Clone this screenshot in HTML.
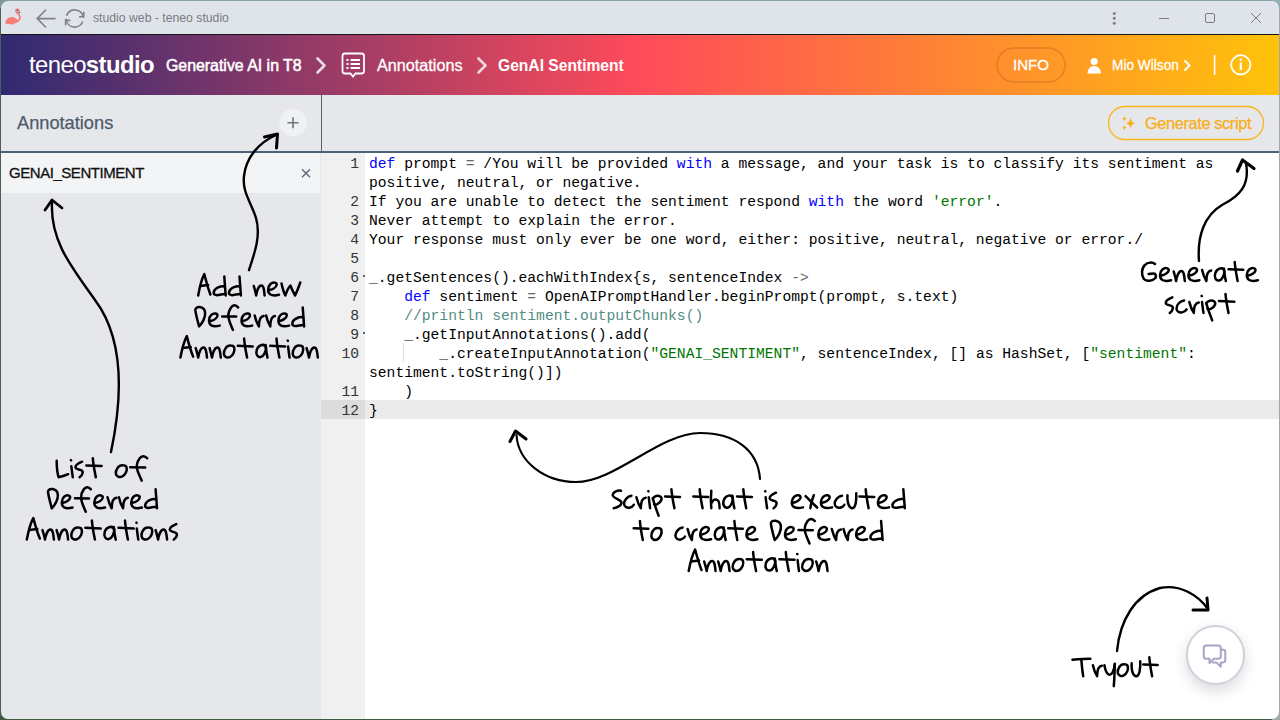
<!DOCTYPE html>
<html><head><meta charset="utf-8">
<style>
*{margin:0;padding:0;box-sizing:border-box}
html,body{width:1280px;height:720px;overflow:hidden;background:#3c4a3f}
body{font-family:"Liberation Sans",sans-serif;position:relative}
.abs{position:absolute}
#win{position:absolute;left:0;top:0;width:1280px;height:720px;background:#e6e7eb}
#tb{position:absolute;left:0;top:0;width:1280px;height:34px;background:#dfe3ea}
#tbline{position:absolute;left:0;top:34px;width:1280px;height:1px;background:#151515}
#hdr{position:absolute;left:0;top:35px;width:1280px;height:60px;
 background:linear-gradient(90deg,#2f2a72 0%,#ff4b5a 50%,#ffc30a 100%)}
.ht{position:absolute;color:#fff;white-space:nowrap}
.med{-webkit-text-stroke:0.3px #fff}
.semi{-webkit-text-stroke:0.55px #fff}
#lp{position:absolute;left:0;top:95px;width:320px;height:625px;background:#e6e7eb}
#ph{position:absolute;left:0;top:95px;width:1280px;height:57px;background:#e6e7eb}
#hline{position:absolute;left:0;top:151px;width:1280px;height:2px;background:#4f6174}
#vline{position:absolute;left:321px;top:95px;width:1.2px;height:57px;background:#4f6174}
#item{position:absolute;left:0;top:153px;width:320px;height:40px;background:#f3f4f6}
#ed{position:absolute;left:321px;top:153px;width:959px;height:567px;background:#fff}
#gut{position:absolute;left:321px;top:153px;width:44px;height:567px;background:#f0f0f0}
#act{position:absolute;left:321px;top:400px;width:959px;height:19px;background:#ebebeb}
#code{position:absolute;left:0;top:0;font-family:"Liberation Mono",monospace;font-size:14.667px;line-height:19px;color:#000;white-space:pre}
.ln{position:absolute;left:321px;width:38px;text-align:right;font-family:"Liberation Mono",monospace;font-size:14.667px;line-height:19px;color:#333}
.cl{position:absolute;left:369px;font-family:"Liberation Mono",monospace;font-size:14.667px;line-height:19px;color:#000;white-space:pre}
.k{color:#0000ff}.s{color:#007400}.c{color:#528c82}.o{color:#666}
.hw{position:absolute;font-family:"Liberation Sans",sans-serif;color:#000;white-space:nowrap;line-height:1}
</style></head><body>
<div id="win">
 <div id="tb"></div>
 <div id="tbline"></div>
 <div id="hdr"></div>
 <div id="lp"></div>
 <div id="ph"></div>
 <div id="item"></div>
 <div id="ed"></div>
 <div id="gut"></div>
 <div id="act"></div>
 <div class="abs" style="left:321px;top:400px;width:44px;height:19px;background:#dcdcdc"></div>
 <div id="hline"></div>
 <div id="vline"></div>
</div>
<!-- title bar -->
<svg class="abs" style="left:0;top:0" width="1280" height="34">
 <!-- flamingo -->
 <path d="M5.3 23.6C5.5 19.8 8.3 17 11.8 17C14.6 17 16.6 18.8 18.2 20.8C17 22.8 15 24 12.8 24.1L13 24.9L11.9 25L11.5 24.1C9.2 24.2 7 24.1 5.3 23.6Z" fill="#f87d74"/>
 <path d="M17.3 21.6C19.6 20.2 20.6 17.6 19.3 15.3C18.2 13.5 16 12.4 16 10.8C16 9.4 17.6 8.8 18.8 10.3" fill="none" stroke="#f87d74" stroke-width="1.9" stroke-linecap="round"/>
 <circle cx="19.3" cy="12.4" r="0.9" fill="#606060"/>
 <circle cx="17.5" cy="10.2" r="0.6" fill="#553333"/>
 <!-- back arrow -->
 <path d="M55 18.6H37.2M45.5 10.2L37.2 18.6 45.5 27" fill="none" stroke="#7f8287" stroke-width="1.6" stroke-linecap="round"/>
 <!-- reload -->
 <path d="M66.78 15.14A8.6 8.6 0 0 1 83.17 17.01M82.49 22.13A8.6 8.6 0 0 1 66.13 19.25" fill="none" stroke="#7f8287" stroke-width="1.6" stroke-linecap="round"/>
 <path d="M83.7 11.8V16.8H79M65.6 25.4V20.4H70.3" fill="none" stroke="#7f8287" stroke-width="1.6"/>
 <!-- dots -->
 <circle cx="1114.3" cy="13.4" r="1.5" fill="#808286"/>
 <circle cx="1114.3" cy="18.3" r="1.5" fill="#808286"/>
 <circle cx="1114.3" cy="23.2" r="1.5" fill="#808286"/>
 <path d="M1159 18.5h10" stroke="#7a7c80" stroke-width="1"/>
 <rect x="1205.5" y="13.5" width="9" height="9" rx="1.5" fill="none" stroke="#7a7c80" stroke-width="1"/>
 <path d="M1251 13l10 10M1261 13l-10 10" stroke="#7a7c80" stroke-width="1"/>
</svg>
<div class="abs" style="left:93px;top:11px;font-size:12.5px;color:#7a7c80;white-space:nowrap;transform:scaleX(0.978);transform-origin:0 0">studio web - teneo studio</div>
<!-- header content -->
<div class="ht" style="left:29px;top:51px;font-size:24.5px;letter-spacing:-0.6px;transform:scaleX(0.975);transform-origin:0 0"><span style="font-weight:normal">teneo</span><b>studio</b></div>
<div class="ht semi" id="h1" style="left:166.20px;top:56px;font-size:16.5px;transform:scaleX(0.9622);transform-origin:0 0">Generative AI in T8</div>
<svg class="abs" style="left:0;top:34px" width="1280" height="60">
 <path d="M317.5 24.5l7 7-7 7" fill="none" stroke="#e6dce6" stroke-width="2.6" stroke-linecap="round" stroke-linejoin="round"/>
 <path d="M478.5 24.5l7 7-7 7" fill="none" stroke="#f0d8dc" stroke-width="2.6" stroke-linecap="round" stroke-linejoin="round"/>
 <!-- annotations icon -->
 <path d="M345 19.5h16.5a2.5 2.5 0 0 1 2.5 2.5v15a2.5 2.5 0 0 1-2.5 2.5h-6l-2.5 3-2.5-3h-5.5a2.5 2.5 0 0 1-2.5-2.5v-15a2.5 2.5 0 0 1 2.5-2.5z" fill="none" stroke="#fff" stroke-width="1.8"/>
 <g fill="#fff"><rect x="346.5" y="25" width="2" height="2"/><rect x="346.5" y="29" width="2" height="2"/><rect x="346.5" y="33" width="2" height="2"/>
 <rect x="350.5" y="25" width="9.5" height="2"/><rect x="350.5" y="29" width="9.5" height="2"/><rect x="350.5" y="33" width="9.5" height="2"/></g>
 <!-- info pill -->
 <rect x="997" y="14" width="68" height="34" rx="17" fill="none" stroke="rgba(170,90,20,0.35)" stroke-width="1.5"/>
 <!-- person -->
 <circle cx="1094.2" cy="27.5" r="3.6" fill="#fff"/>
 <path d="M1087.5 39.5c0-4.5 3-7.5 6.7-7.5s6.7 3 6.7 7.5z" fill="#fff"/>
 <path d="M1185 27l4.5 4.5-4.5 4.5" fill="none" stroke="#fff" stroke-width="2" stroke-linecap="round" stroke-linejoin="round"/>
 <rect x="1213.8" y="21" width="1.6" height="20" fill="#fff"/>
 <circle cx="1240.8" cy="30.8" r="9.6" fill="none" stroke="#fff" stroke-width="1.8"/>
 <circle cx="1240.8" cy="25.8" r="1.3" fill="#fff"/>
 <rect x="1239.7" y="28.5" width="2.2" height="7.5" fill="#fff"/>
</svg>
<div class="ht med" id="h2" style="left:377.40px;top:56px;font-size:16.5px;transform:scaleX(0.9812);transform-origin:0 0">Annotations</div>
<div class="ht" id="h3" style="left:498.00px;top:56px;font-size:16.5px;transform:scaleX(0.9460);transform-origin:0 0;font-weight:bold">GenAI Sentiment</div>
<div class="ht med" id="h4" style="left:1013.00px;top:56px;font-size:15.5px;transform:scaleX(0.9718);transform-origin:0 0">INFO</div>
<div class="ht med" id="h5" style="left:1112.00px;top:56px;font-size:15.5px;transform:scaleX(0.8825);transform-origin:0 0">Mio Wilson</div>
<!-- panel -->
<div class="abs" id="annh" style="left:17px;top:112px;font-size:18.5px;color:#4d5b6c;white-space:nowrap;-webkit-text-stroke:0.25px #4d5b6c;transform:scaleX(0.985);transform-origin:0 0">Annotations</div>
<svg class="abs" style="left:0;top:95px" width="1280" height="100">
 <circle cx="293" cy="27.8" r="13.8" fill="#f0f1f3"/>
 <path d="M293 22.3v11M287.5 27.8h11" stroke="#6c7480" stroke-width="1.6"/>
 <path d="M302 74.3l8 8M310 74.3l-8 8" stroke="#5b6470" stroke-width="1.3"/>
 <!-- generate script button -->
 <rect x="1108.5" y="11.5" width="155" height="33" rx="16.5" fill="none" stroke="#f8b61c" stroke-width="1.3"/>
 <path d="M1130.5 22C1131 26 1131.8 27.3 1135.3 28.3C1131.8 29.3 1131 30.6 1130.5 34.6C1130 30.6 1129.2 29.3 1125.7 28.3C1129.2 27.3 1130 26 1130.5 22Z" fill="#f8b015"/>
 <path d="M1124.3 21.2q.5 2.1 2.1 2.5q-1.6.4-2.1 2.5q-.5-2.1-2.1-2.5q1.6-.4 2.1-2.5z" fill="#f8b015"/>
 <path d="M1124.3 30.2q.5 2.1 2.1 2.5q-1.6.4-2.1 2.5q-.5-2.1-2.1-2.5q1.6-.4 2.1-2.5z" fill="#f8b015"/>
</svg>
<div class="abs" id="genb" style="left:1145px;top:114px;font-size:16.3px;letter-spacing:-0.35px;color:#f8ae16;-webkit-text-stroke:0.25px #f8ae16;white-space:nowrap">Generate script</div>
<div class="abs" id="itemt" style="left:9px;top:164px;font-size:15px;letter-spacing:-0.45px;color:#111;-webkit-text-stroke:0.3px #111;white-space:nowrap">GENAI_SENTIMENT</div>
<!-- code -->
<div class="ln" style="top:155px">1</div>
<div class="ln" style="top:193px">2</div>
<div class="ln" style="top:212px">3</div>
<div class="ln" style="top:231px">4</div>
<div class="ln" style="top:250px">5</div>
<div class="ln" style="top:269px">6</div>
<div class="ln" style="top:288px">7</div>
<div class="ln" style="top:307px">8</div>
<div class="ln" style="top:326px">9</div>
<div class="ln" style="top:345px">10</div>
<div class="ln" style="top:383px">11</div>
<div class="ln" style="top:402px">12</div>
<div class="cl" style="top:155px"><span class="k">def</span> prompt <span class="o">=</span> /You will be provided <span class="k">with</span> a message, and your task is to classify its sentiment as</div>
<div class="cl" style="top:174px">positive, neutral, or negative.</div>
<div class="cl" style="top:193px">If you are unable to detect the sentiment respond <span class="k">with</span> the word <span class="s">'error'</span>.</div>
<div class="cl" style="top:212px">Never attempt to explain the error.</div>
<div class="cl" style="top:231px">Your response must only ever be one word, either: positive, neutral, negative or error./</div>
<div class="cl" style="top:269px">_.getSentences().eachWithIndex{s, sentenceIndex <span class="o">-&gt;</span></div>
<div class="cl" style="top:288px">    <span class="k">def</span> sentiment <span class="o">=</span> OpenAIPromptHandler.beginPrompt(prompt, s.text)</div>
<div class="cl" style="top:307px">    <span class="c">//println sentiment.outputChunks()</span></div>
<div class="cl" style="top:326px">    _.getInputAnnotations().add(</div>
<div class="cl" style="top:345px">        _.createInputAnnotation(<span class="s">"GENAI_SENTIMENT"</span>, sentenceIndex, [] as HashSet, [<span class="s">"sentiment"</span>:</div>
<div class="cl" style="top:364px">sentiment.toString()])</div>
<div class="cl" style="top:383px">    )</div>
<div class="cl" style="top:402px">}</div>
<div class="abs" style="left:363px;top:275px;width:2px;height:1.5px;background:#666"></div>
<div class="abs" style="left:363px;top:332px;width:2px;height:1.5px;background:#666"></div>
<div class="abs" style="left:403px;top:343px;width:1px;height:19px;background:#e0e0e0"></div>
<!-- arrows -->
<svg class="abs" style="left:0;top:0" width="1280" height="720" fill="none" stroke="#000" stroke-width="2.4" stroke-linecap="round" stroke-linejoin="round">
 <path d="M111 452C122 400 125 340 95 300C70 265 50 240 52 202"/>
 <path d="M45 210L52 200L62 208" stroke-width="2.8"/>
 <path d="M249 270C255 252 261 235 256 218C251 202 242 192 244 176C246 158 258 143 276 135"/>
 <path d="M264.5 137L277.5 134L276.5 148" stroke-width="3"/>
 <path d="M1199 261C1197 235 1205 215 1222 205C1240 196 1250 185 1246 163"/>
 <path d="M1237.5 171L1242.5 160L1254 168.5" stroke-width="3.2"/>
 <path d="M760 479C758 450 735 433 700 433C660 433 615 482 576 482C545 482 518 462 516.5 435" stroke-width="2.1"/>
 <path d="M510 441.5L515.5 431L526 439" stroke-width="3"/>
 <path d="M1117 651C1120 620 1135 595 1160 588C1180 584 1198 595 1208 609"/>
 <path d="M1193 610L1208 610L1207 598" stroke-width="3"/>
</svg>
<!-- tryout bubble -->
<div class="abs" style="left:1185.5px;top:625px;width:59.5px;height:59.5px;border-radius:50%;background:#fff;border:2px solid #cfd2db;box-shadow:0 6px 14px rgba(30,30,70,0.16)"></div>
<svg class="abs" style="left:1180px;top:620px" width="70" height="70" fill="none" stroke="#a9a4c8" stroke-width="2" stroke-linejoin="round">
 <path d="M26.3 25.5h12a2.5 2.5 0 0 1 2.5 2.5v8.3a2.5 2.5 0 0 1-2.5 2.5h-4.5l-4.3 4.3v-4.3h-3.2a2.5 2.5 0 0 1-2.5-2.5v-8.3a2.5 2.5 0 0 1 2.5-2.5z"/>
 <path d="M40.8 29.8h2.2a2.3 2.3 0 0 1 2.3 2.3v8a2.3 2.3 0 0 1-2.3 2.3h-2.2v4.3l-4.4-4.3h-4.5"/>
</svg>
<!--HW-->
<svg class="abs" style="left:0;top:0" width="1280" height="720" fill="none" stroke="#000" stroke-width="2.5" stroke-linecap="round" stroke-linejoin="round">
<path d="M 198.2 295.5C199.6 287.5 201.5 279.5 204.3 274.0C205.7 279.5 208.1 288.5 210.4 294.5"/>
<path d="M 200.5 286.0L208.1 285.0"/>
<path d="M 224.3 286.5C221.9 285.5 215.3 287.5 213.9 291.5C213.0 294.5 215.3 295.5 218.1 295.0C221.0 294.5 223.8 294.0 225.2 294.0"/>
<path d="M 224.3 276.5C224.7 282.5 225.2 289.5 225.7 295.5"/>
<path d="M 239.5 286.5C237.2 285.5 230.6 287.5 229.2 291.5C228.2 294.5 230.6 295.5 233.4 295.0C236.2 294.5 239.0 294.0 240.4 294.0"/>
<path d="M 239.5 276.5C240.0 282.5 240.4 289.5 240.9 295.5"/>
<path d="M 253.8 286.0C254.8 289.5 255.7 292.5 256.2 295.5C256.6 291.5 258.5 285.5 261.3 285.5C263.7 285.5 264.2 290.5 264.6 295.5"/>
<path d="M 269.5 290.0C272.4 289.5 276.1 287.5 276.6 285.0C277.1 282.5 273.3 281.5 270.5 284.0C267.7 286.5 267.2 292.5 270.5 294.5C272.8 295.8 276.1 295.5 279.0 294.7"/>
<path d="M 281.5 283.5C282.4 287.5 283.8 292.5 285.3 295.5C286.7 291.5 288.6 287.5 290.4 285.5C291.9 289.5 293.3 292.5 295.1 295.5C297.0 291.5 298.9 286.5 300.3 282.5"/>
<path d="M 195.3 310.4C194.9 305.4 204.2 305.9 205.1 312.4C205.6 317.4 202.3 323.4 199.1 326.4C197.7 321.4 196.3 316.4 195.3 310.4Z"/>
<path d="M 210.4 320.9C213.2 320.4 216.9 318.4 217.4 315.9C217.9 313.4 214.1 312.4 211.3 314.9C208.5 317.4 208.1 323.4 211.3 325.4C213.7 326.7 216.9 326.4 219.7 325.6"/>
<path d="M 238.1 307.4C235.7 304.4 232.9 304.9 231.1 307.4C228.3 311.4 227.8 316.4 229.2 320.4C230.1 323.4 231.5 326.4 232.9 329.9"/>
<path d="M 222.2 316.4L236.2 316.6"/>
<path d="M 242.9 320.9C245.7 320.4 249.4 318.4 249.9 315.9C250.3 313.4 246.6 312.4 243.8 314.9C241.0 317.4 240.6 323.4 243.8 325.4C246.1 326.7 249.4 326.4 252.2 325.6"/>
<path d="M 254.7 315.4C255.6 319.4 257.0 323.4 258.9 326.4C258.9 321.4 260.3 316.4 263.6 315.9"/>
<path d="M 266.1 315.4C267.0 319.4 268.4 323.4 270.3 326.4C270.3 321.4 271.7 316.4 274.9 315.9"/>
<path d="M 279.8 320.9C282.5 320.4 286.3 318.4 286.7 315.9C287.2 313.4 283.5 312.4 280.7 314.9C277.9 317.4 277.4 323.4 280.7 325.4C283.0 326.7 286.3 326.4 289.1 325.6"/>
<path d="M 302.7 317.4C300.4 316.4 293.9 318.4 292.5 322.4C291.6 325.4 293.9 326.4 296.7 325.9C299.5 325.4 302.3 324.9 303.7 324.9"/>
<path d="M 302.7 307.4C303.2 313.4 303.7 320.4 304.1 326.4"/>
<path d="M 180.4 357.6C181.9 349.6 183.8 341.6 186.8 336.1C188.2 341.6 190.7 350.6 193.1 356.6"/>
<path d="M 182.9 348.1L190.7 347.1"/>
<path d="M 195.7 348.1C196.7 351.6 197.7 354.6 198.2 357.6C198.7 353.6 200.6 347.6 203.5 347.6C206.0 347.6 206.5 352.6 207.0 357.6"/>
<path d="M 209.6 348.1C210.6 351.6 211.5 354.6 212.0 357.6C212.5 353.6 214.5 347.6 217.4 347.6C219.8 347.6 220.3 352.6 220.8 357.6"/>
<path d="M 230.8 345.6C226.4 345.1 223.4 350.6 223.9 354.1C224.4 357.1 227.3 358.1 229.8 357.1C233.2 355.6 235.1 350.6 234.2 347.6C233.7 346.1 232.2 345.6 230.8 345.6Z"/>
<path d="M 244.1 338.6C244.6 345.6 246.1 352.6 247.1 357.6"/>
<path d="M 237.8 345.8L252.7 346.4"/>
<path d="M 266.1 347.6C264.6 343.1 258.8 344.6 256.8 349.6C255.3 354.6 257.8 357.6 260.7 357.1C263.6 356.6 266.1 351.6 266.1 347.6"/>
<path d="M 265.6 345.1C266.1 349.6 266.6 354.6 267.5 357.6"/>
<path d="M 276.5 338.6C277.0 345.6 278.5 352.6 279.4 357.6"/>
<path d="M 270.2 345.8L285.1 346.4"/>
<path d="M 288.1 346.6C288.6 350.6 289.1 354.6 289.6 357.6"/>
<path d="M 287.7 340.6L287.9 340.8"/>
<path d="M 299.5 345.6C295.1 345.1 292.2 350.6 292.7 354.1C293.2 357.1 296.1 358.1 298.6 357.1C302.0 355.6 303.9 350.6 303.0 347.6C302.5 346.1 301.0 345.6 299.5 345.6Z"/>
<path d="M 306.6 348.1C307.5 351.6 308.5 354.6 309.0 357.6C309.5 353.6 311.4 347.6 314.4 347.6C316.8 347.6 317.3 352.6 317.8 357.6"/>
<path d="M 56.7 460.7C56.7 467.2 57.2 473.2 58.7 477.2C61.2 476.7 65.2 475.7 68.2 474.2"/>
<path d="M 71.3 466.2C71.8 470.2 72.3 474.2 72.8 477.2"/>
<path d="M 70.9 460.2L71.1 460.4"/>
<path d="M 82.1 461.7C79.6 462.7 75.5 465.2 75.5 467.2C75.5 469.2 79.1 469.2 81.1 470.2C83.6 471.2 83.1 474.7 79.6 477.2"/>
<path d="M 92.8 458.2C93.3 465.2 94.8 472.2 95.8 477.2"/>
<path d="M 86.3 465.4L101.6 466.0"/>
<path d="M 122.9 465.2C118.4 464.7 115.4 470.2 115.9 473.7C116.4 476.7 119.4 477.7 121.9 476.7C125.5 475.2 127.5 470.2 126.5 467.2C126.0 465.7 124.4 465.2 122.9 465.2Z"/>
<path d="M 147.2 458.2C144.7 455.2 141.7 455.7 139.7 458.2C136.7 462.2 136.2 467.2 137.7 471.2C138.7 474.2 140.2 477.2 141.7 480.7"/>
<path d="M 130.2 467.2L145.2 467.4"/>
<path d="M 48.0 492.3C47.6 487.3 56.9 487.8 57.8 494.3C58.3 499.3 55.0 505.3 51.8 508.3C50.4 503.3 49.0 498.3 48.0 492.3Z"/>
<path d="M 63.1 502.8C65.9 502.3 69.7 500.3 70.1 497.8C70.6 495.3 66.9 494.3 64.1 496.8C61.3 499.3 60.8 505.3 64.1 507.3C66.4 508.6 69.7 508.3 72.5 507.5"/>
<path d="M 90.8 489.3C88.5 486.3 85.7 486.8 83.8 489.3C81.0 493.3 80.6 498.3 82.0 502.3C82.9 505.3 84.3 508.3 85.7 511.8"/>
<path d="M 75.0 498.3L89.0 498.5"/>
<path d="M 95.7 502.8C98.5 502.3 102.2 500.3 102.7 497.8C103.1 495.3 99.4 494.3 96.6 496.8C93.8 499.3 93.3 505.3 96.6 507.3C98.9 508.6 102.2 508.3 105.0 507.5"/>
<path d="M 107.5 497.3C108.5 501.3 109.9 505.3 111.7 508.3C111.7 503.3 113.1 498.3 116.4 497.8"/>
<path d="M 118.9 497.3C119.8 501.3 121.2 505.3 123.1 508.3C123.1 503.3 124.5 498.3 127.8 497.8"/>
<path d="M 132.6 502.8C135.4 502.3 139.1 500.3 139.6 497.8C140.1 495.3 136.3 494.3 133.5 496.8C130.7 499.3 130.3 505.3 133.5 507.3C135.9 508.6 139.1 508.3 141.9 507.5"/>
<path d="M 155.6 499.3C153.3 498.3 146.8 500.3 145.4 504.3C144.4 507.3 146.8 508.3 149.6 507.8C152.4 507.3 155.2 506.8 156.6 506.8"/>
<path d="M 155.6 489.3C156.1 495.3 156.6 502.3 157.0 508.3"/>
<path d="M 26.8 539.6C28.3 531.6 30.3 523.6 33.3 518.1C34.8 523.6 37.3 532.6 39.8 538.6"/>
<path d="M 29.3 530.1L37.3 529.1"/>
<path d="M 42.5 530.1C43.5 533.6 44.5 536.6 45.0 539.6C45.5 535.6 47.5 529.6 50.5 529.6C52.9 529.6 53.4 534.6 53.9 539.6"/>
<path d="M 56.6 530.1C57.6 533.6 58.6 536.6 59.1 539.6C59.6 535.6 61.6 529.6 64.6 529.6C67.1 529.6 67.6 534.6 68.1 539.6"/>
<path d="M 78.2 527.6C73.8 527.1 70.8 532.6 71.3 536.1C71.8 539.1 74.8 540.1 77.2 539.1C80.7 537.6 82.7 532.6 81.7 529.6C81.2 528.1 79.7 527.6 78.2 527.6Z"/>
<path d="M 91.9 520.6C92.4 527.6 93.9 534.6 94.9 539.6"/>
<path d="M 85.4 527.8L100.7 528.4"/>
<path d="M 114.3 529.6C112.8 525.1 106.8 526.6 104.8 531.6C103.3 536.6 105.8 539.6 108.8 539.1C111.8 538.6 114.3 533.6 114.3 529.6"/>
<path d="M 113.8 527.1C114.3 531.6 114.8 536.6 115.8 539.6"/>
<path d="M 125.0 520.6C125.5 527.6 127.0 534.6 127.9 539.6"/>
<path d="M 118.5 527.8L133.7 528.4"/>
<path d="M 136.8 528.6C137.3 532.6 137.8 536.6 138.3 539.6"/>
<path d="M 136.4 522.6L136.6 522.8"/>
<path d="M 148.5 527.6C144.0 527.1 141.0 532.6 141.5 536.1C142.0 539.1 145.0 540.1 147.5 539.1C151.0 537.6 153.0 532.6 152.0 529.6C151.5 528.1 150.0 527.6 148.5 527.6Z"/>
<path d="M 155.6 530.1C156.6 533.6 157.6 536.6 158.1 539.6C158.6 535.6 160.6 529.6 163.6 529.6C166.1 529.6 166.6 534.6 167.1 539.6"/>
<path d="M 176.3 524.1C173.8 525.1 169.8 527.6 169.8 529.6C169.8 531.6 173.3 531.6 175.3 532.6C177.8 533.6 177.3 537.1 173.8 539.6"/>
<path d="M 1155.0 264.0C1152.6 262.0 1147.8 262.0 1144.9 265.0C1141.5 268.0 1141.0 275.0 1143.9 279.0C1146.8 282.0 1152.6 281.0 1155.5 278.0C1156.4 276.0 1155.5 273.5 1154.0 273.5C1152.1 273.5 1150.2 273.5 1148.7 274.0"/>
<path d="M 1161.5 275.5C1164.3 275.0 1168.2 273.0 1168.7 270.5C1169.2 268.0 1165.3 267.0 1162.4 269.5C1159.5 272.0 1159.0 278.0 1162.4 280.0C1164.8 281.3 1168.2 281.0 1171.1 280.2"/>
<path d="M 1173.7 271.5C1174.7 275.0 1175.6 278.0 1176.1 281.0C1176.6 277.0 1178.5 271.0 1181.4 271.0C1183.8 271.0 1184.3 276.0 1184.8 281.0"/>
<path d="M 1189.8 275.5C1192.7 275.0 1196.6 273.0 1197.0 270.5C1197.5 268.0 1193.7 267.0 1190.8 269.5C1187.9 272.0 1187.4 278.0 1190.8 280.0C1193.2 281.3 1196.6 281.0 1199.4 280.2"/>
<path d="M 1202.1 270.0C1203.0 274.0 1204.5 278.0 1206.4 281.0C1206.4 276.0 1207.8 271.0 1211.2 270.5"/>
<path d="M 1224.4 271.0C1223.0 266.5 1217.2 268.0 1215.3 273.0C1213.8 278.0 1216.2 281.0 1219.1 280.5C1222.0 280.0 1224.4 275.0 1224.4 271.0"/>
<path d="M 1223.9 268.5C1224.4 273.0 1224.9 278.0 1225.9 281.0"/>
<path d="M 1234.7 262.0C1235.2 269.0 1236.7 276.0 1237.6 281.0"/>
<path d="M 1228.5 269.2L1243.2 269.8"/>
<path d="M 1248.3 275.5C1251.1 275.0 1255.0 273.0 1255.5 270.5C1256.0 268.0 1252.1 267.0 1249.2 269.5C1246.3 272.0 1245.8 278.0 1249.2 280.0C1251.6 281.3 1255.0 281.0 1257.9 280.2"/>
<path d="M 1172.3 297.4C1169.8 298.4 1165.8 300.9 1165.8 302.9C1165.8 304.9 1169.3 304.9 1171.3 305.9C1173.8 306.9 1173.3 310.4 1169.8 312.9"/>
<path d="M 1184.1 300.4C1180.0 300.9 1176.5 304.9 1176.5 308.4C1176.5 311.9 1180.0 312.9 1182.0 312.4C1184.1 311.9 1186.1 310.4 1186.6 309.4"/>
<path d="M 1189.3 301.9C1190.3 305.9 1191.8 309.9 1193.8 312.9C1193.8 307.9 1195.3 302.9 1198.8 302.4"/>
<path d="M 1202.0 301.9C1202.5 305.9 1203.0 309.9 1203.5 312.9"/>
<path d="M 1201.6 295.9L1201.8 296.1"/>
<path d="M 1206.2 302.9C1207.7 308.9 1210.2 314.9 1212.2 320.4"/>
<path d="M 1206.2 303.4C1207.7 300.4 1211.7 299.9 1214.2 301.4C1216.2 302.9 1215.2 306.9 1210.7 308.9C1209.2 309.4 1208.2 309.1 1207.5 308.9"/>
<path d="M 1225.5 293.9C1226.0 300.9 1227.5 307.9 1228.5 312.9"/>
<path d="M 1219.0 301.1L1234.3 301.7"/>
<path d="M 621.0 490.7C617.6 489.7 613.2 492.2 612.7 494.7C612.2 498.2 621.5 499.2 621.5 502.7C621.5 505.7 616.6 507.7 613.7 508.2"/>
<path d="M 631.4 495.7C627.5 496.2 624.1 500.2 624.1 503.7C624.1 507.2 627.5 508.2 629.4 507.7C631.4 507.2 633.3 505.7 633.8 504.7"/>
<path d="M 636.4 497.2C637.4 501.2 638.9 505.2 640.8 508.2C640.8 503.2 642.3 498.2 645.7 497.7"/>
<path d="M 648.7 497.2C649.2 501.2 649.7 505.2 650.1 508.2"/>
<path d="M 648.3 491.2L648.5 491.4"/>
<path d="M 652.8 498.2C654.2 504.2 656.7 510.2 658.6 515.7"/>
<path d="M 652.8 498.7C654.2 495.7 658.1 495.2 660.6 496.7C662.5 498.2 661.5 502.2 657.2 504.2C655.7 504.7 654.7 504.4 654.0 504.2"/>
<path d="M 671.4 489.2C671.9 496.2 673.4 503.2 674.4 508.2"/>
<path d="M 665.1 496.4L680.0 497.0"/>
<path d="M 699.7 489.2C700.1 496.2 701.6 503.2 702.6 508.2"/>
<path d="M 693.3 496.4L708.2 497.0"/>
<path d="M 711.3 490.7C710.8 496.2 710.8 503.2 711.3 508.2"/>
<path d="M 711.6 502.7C712.8 500.2 714.7 499.2 716.7 499.7C719.1 500.2 719.6 504.2 719.6 508.2"/>
<path d="M 732.9 498.2C731.5 493.7 725.6 495.2 723.7 500.2C722.2 505.2 724.7 508.2 727.6 507.7C730.5 507.2 732.9 502.2 732.9 498.2"/>
<path d="M 732.4 495.7C732.9 500.2 733.4 505.2 734.4 508.2"/>
<path d="M 743.3 489.2C743.8 496.2 745.3 503.2 746.2 508.2"/>
<path d="M 737.0 496.4L751.9 497.0"/>
<path d="M 765.6 497.2C766.1 501.2 766.6 505.2 767.1 508.2"/>
<path d="M 765.2 491.2L765.4 491.4"/>
<path d="M 776.0 492.7C773.6 493.7 769.7 496.2 769.7 498.2C769.7 500.2 773.1 500.2 775.0 501.2C777.5 502.2 777.0 505.7 773.6 508.2"/>
<path d="M 793.2 502.7C796.1 502.2 800.0 500.2 800.5 497.7C801.0 495.2 797.1 494.2 794.2 496.7C791.3 499.2 790.8 505.2 794.2 507.2C796.6 508.5 800.0 508.2 802.9 507.4"/>
<path d="M 805.6 496.2C809.5 500.2 813.8 504.2 817.2 507.7"/>
<path d="M 813.8 495.2C812.4 499.2 810.9 503.2 810.4 508.2"/>
<path d="M 822.3 502.7C825.2 502.2 829.1 500.2 829.6 497.7C830.1 495.2 826.2 494.2 823.3 496.7C820.4 499.2 819.9 505.2 823.3 507.2C825.7 508.5 829.1 508.2 832.0 507.4"/>
<path d="M 842.0 495.7C838.1 496.2 834.7 500.2 834.7 503.7C834.7 507.2 838.1 508.2 840.0 507.7C842.0 507.2 843.9 505.7 844.4 504.7"/>
<path d="M 847.5 495.2C847.0 500.2 848.0 507.2 851.9 508.2C855.8 508.7 856.7 499.2 856.2 493.2"/>
<path d="M 865.7 489.2C866.2 496.2 867.6 503.2 868.6 508.2"/>
<path d="M 859.4 496.4L874.2 497.0"/>
<path d="M 879.3 502.7C882.2 502.2 886.1 500.2 886.6 497.7C887.1 495.2 883.2 494.2 880.3 496.7C877.4 499.2 876.9 505.2 880.3 507.2C882.7 508.5 886.1 508.2 889.0 507.4"/>
<path d="M 903.3 499.2C900.9 498.2 894.1 500.2 892.6 504.2C891.7 507.2 894.1 508.2 897.0 507.7C899.9 507.2 902.8 506.7 904.3 506.7"/>
<path d="M 903.3 489.2C903.8 495.2 904.3 502.2 904.8 508.2"/>
<path d="M 639.9 521.0C640.4 528.0 641.8 535.0 642.8 540.0"/>
<path d="M 633.7 528.2L648.3 528.8"/>
<path d="M 658.0 528.0C653.7 527.5 650.9 533.0 651.4 536.5C651.8 539.5 654.7 540.5 657.1 539.5C660.4 538.0 662.3 533.0 661.4 530.0C660.9 528.5 659.5 528.0 658.0 528.0Z"/>
<path d="M 682.6 527.5C678.8 528.0 675.4 532.0 675.4 535.5C675.4 539.0 678.8 540.0 680.7 539.5C682.6 539.0 684.5 537.5 685.0 536.5"/>
<path d="M 687.6 529.0C688.5 533.0 689.9 537.0 691.9 540.0C691.9 535.0 693.3 530.0 696.6 529.5"/>
<path d="M 701.6 534.5C704.5 534.0 708.3 532.0 708.8 529.5C709.2 527.0 705.4 526.0 702.5 528.5C699.7 531.0 699.2 537.0 702.5 539.0C704.9 540.3 708.3 540.0 711.1 539.2"/>
<path d="M 724.2 530.0C722.8 525.5 717.1 527.0 715.2 532.0C713.7 537.0 716.1 540.0 719.0 539.5C721.8 539.0 724.2 534.0 724.2 530.0"/>
<path d="M 723.7 527.5C724.2 532.0 724.7 537.0 725.7 540.0"/>
<path d="M 734.4 521.0C734.9 528.0 736.4 535.0 737.3 540.0"/>
<path d="M 728.2 528.2L742.8 528.8"/>
<path d="M 747.8 534.5C750.7 534.0 754.5 532.0 755.0 529.5C755.5 527.0 751.6 526.0 748.8 528.5C745.9 531.0 745.4 537.0 748.8 539.0C751.2 540.3 754.5 540.0 757.4 539.2"/>
<path d="M 770.9 524.0C770.4 519.0 780.0 519.5 780.9 526.0C781.4 531.0 778.1 537.0 774.7 540.0C773.3 535.0 771.9 530.0 770.9 524.0Z"/>
<path d="M 786.4 534.5C789.3 534.0 793.1 532.0 793.6 529.5C794.0 527.0 790.2 526.0 787.3 528.5C784.5 531.0 784.0 537.0 787.3 539.0C789.7 540.3 793.1 540.0 795.9 539.2"/>
<path d="M 814.8 521.0C812.4 518.0 809.5 518.5 807.6 521.0C804.7 525.0 804.2 530.0 805.7 534.0C806.6 537.0 808.1 540.0 809.5 543.5"/>
<path d="M 798.5 530.0L812.8 530.2"/>
<path d="M 819.7 534.5C822.6 534.0 826.4 532.0 826.9 529.5C827.4 527.0 823.5 526.0 820.7 528.5C817.8 531.0 817.3 537.0 820.7 539.0C823.1 540.3 826.4 540.0 829.3 539.2"/>
<path d="M 831.8 529.0C832.8 533.0 834.2 537.0 836.1 540.0C836.1 535.0 837.6 530.0 840.9 529.5"/>
<path d="M 843.5 529.0C844.5 533.0 845.9 537.0 847.8 540.0C847.8 535.0 849.2 530.0 852.6 529.5"/>
<path d="M 857.5 534.5C860.4 534.0 864.2 532.0 864.7 529.5C865.2 527.0 861.4 526.0 858.5 528.5C855.6 531.0 855.1 537.0 858.5 539.0C860.9 540.3 864.2 540.0 867.1 539.2"/>
<path d="M 881.1 531.0C878.7 530.0 872.1 532.0 870.6 536.0C869.7 539.0 872.1 540.0 874.9 539.5C877.8 539.0 880.6 538.5 882.1 538.5"/>
<path d="M 881.1 521.0C881.6 527.0 882.1 534.0 882.6 540.0"/>
<path d="M 688.7 571.0C690.2 563.0 692.2 555.0 695.1 549.5C696.6 555.0 699.1 564.0 701.5 570.0"/>
<path d="M 691.2 561.5L699.1 560.5"/>
<path d="M 704.2 561.5C705.2 565.0 706.2 568.0 706.7 571.0C707.2 567.0 709.1 561.0 712.1 561.0C714.6 561.0 715.1 566.0 715.5 571.0"/>
<path d="M 718.2 561.5C719.2 565.0 720.2 568.0 720.7 571.0C721.2 567.0 723.1 561.0 726.1 561.0C728.6 561.0 729.0 566.0 729.5 571.0"/>
<path d="M 739.6 559.0C735.2 558.5 732.2 564.0 732.7 567.5C733.2 570.5 736.1 571.5 738.6 570.5C742.1 569.0 744.0 564.0 743.0 561.0C742.6 559.5 741.1 559.0 739.6 559.0Z"/>
<path d="M 753.1 552.0C753.6 559.0 755.1 566.0 756.1 571.0"/>
<path d="M 746.7 559.2L761.8 559.8"/>
<path d="M 775.3 561.0C773.8 556.5 767.9 558.0 765.9 563.0C764.4 568.0 766.9 571.0 769.9 570.5C772.8 570.0 775.3 565.0 775.3 561.0"/>
<path d="M 774.8 558.5C775.3 563.0 775.8 568.0 776.8 571.0"/>
<path d="M 785.8 552.0C786.3 559.0 787.8 566.0 788.8 571.0"/>
<path d="M 779.4 559.2L794.5 559.8"/>
<path d="M 797.6 560.0C798.0 564.0 798.5 568.0 799.0 571.0"/>
<path d="M 797.2 554.0L797.4 554.2"/>
<path d="M 809.1 559.0C804.6 558.5 801.7 564.0 802.2 567.5C802.7 570.5 805.6 571.5 808.1 570.5C811.5 569.0 813.5 564.0 812.5 561.0C812.0 559.5 810.6 559.0 809.1 559.0Z"/>
<path d="M 816.2 561.5C817.2 565.0 818.2 568.0 818.6 571.0C819.1 567.0 821.1 561.0 824.1 561.0C826.5 561.0 827.0 566.0 827.5 571.0"/>
<path d="M 1072.4 659.7C1078.0 659.2 1083.7 658.7 1090.3 658.7"/>
<path d="M 1081.3 659.2C1081.8 665.2 1082.3 671.2 1083.2 676.2"/>
<path d="M 1092.9 665.2C1093.8 669.2 1095.2 673.2 1097.1 676.2C1097.1 671.2 1098.5 666.2 1101.8 665.7"/>
<path d="M 1104.4 665.2C1105.3 670.2 1107.2 674.7 1109.6 674.7C1111.9 674.7 1113.8 671.2 1114.8 664.2"/>
<path d="M 1114.8 663.7C1114.8 671.2 1114.3 679.2 1113.8 686.2"/>
<path d="M 1124.4 664.2C1120.1 663.7 1117.3 669.2 1117.8 672.7C1118.3 675.7 1121.1 676.7 1123.4 675.7C1126.8 674.2 1128.6 669.2 1127.7 666.2C1127.2 664.7 1125.8 664.2 1124.4 664.2Z"/>
<path d="M 1131.7 663.2C1131.2 668.2 1132.1 675.2 1135.9 676.2C1139.7 676.7 1140.6 667.2 1140.2 661.2"/>
<path d="M 1149.3 657.2C1149.8 664.2 1151.2 671.2 1152.1 676.2"/>
<path d="M 1143.2 664.4L1157.6 665.0"/>
</svg>
<!--/HW-->
<!-- window frame -->
<svg class="abs" style="left:0;top:0" width="1280" height="720">
 <rect x="0" y="0" width="1280" height="1" fill="#86a0a6"/>
 <rect x="0" y="0" width="1" height="720" fill="#4d5e56"/>
 <rect x="1279" y="0" width="1" height="720" fill="#a3a7a9"/>
 <rect x="0" y="719" width="1280" height="1" fill="#40583f"/>
 <path d="M0 0L8 0L8 1A7 7 0 0 0 1 8L0 8Z" fill="#7d979c"/>
 <path d="M1280 0L1272 0L1272 1A7 7 0 0 1 1279 8L1280 8Z" fill="#8fb0b6"/>
 <path d="M0 720L8 720L8 719A7 7 0 0 1 1 712L0 712Z" fill="#40583f"/>
 <path d="M1280 720L1272 720L1272 719A7 7 0 0 0 1279 712L1280 712Z" fill="#a3a7a9"/>
</svg>
</body></html>
